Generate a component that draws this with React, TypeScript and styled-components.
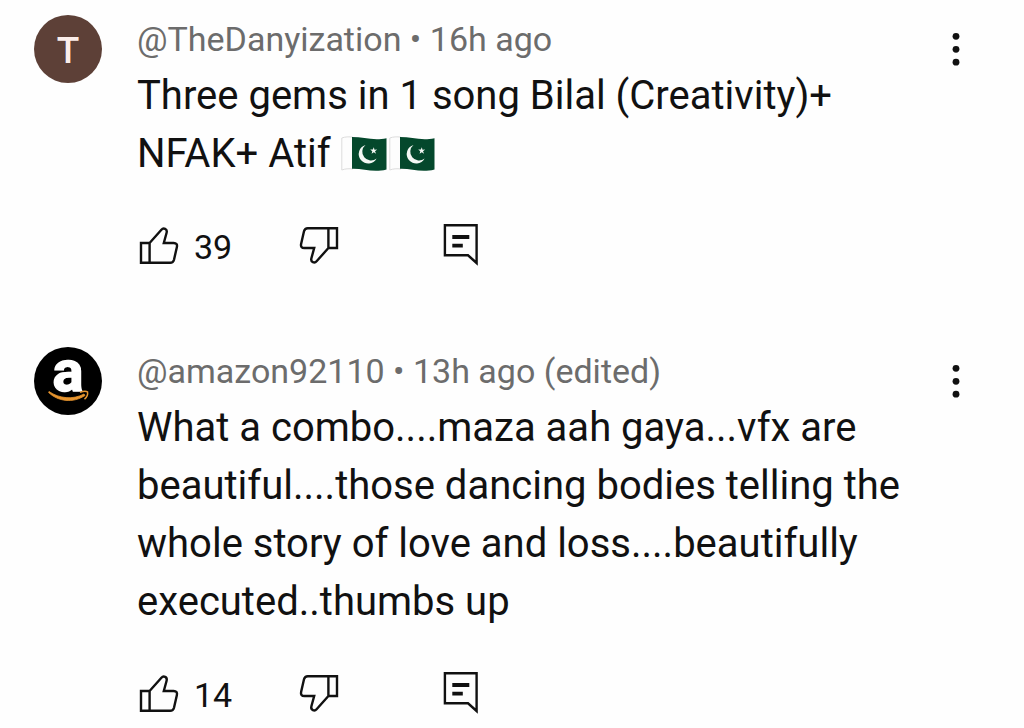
import React from "react";
import styled, { createGlobalStyle } from "styled-components";

const GlobalStyle = createGlobalStyle`
  body {
    margin: 0;
    background: #fefefe;
    color: #111;
    font-family: Roboto, "Liberation Sans", sans-serif;
  }
`;

const CommentList = styled.main`
  display: flex;
  flex-direction: column;
  gap: 77px;
  padding: 15px 34px 0;
`;

const CommentItem = styled.article`
  display: grid;
  grid-template-columns: 68px minmax(0, 1fr) 68px;
  column-gap: 35px;
`;

const Avatar = styled.div<{ $color: string }>`
  display: flex;
  align-items: center;
  justify-content: center;
  width: 68px;
  height: 68px;
  border-radius: 50%;
  background: ${(p) => p.$color};
  color: #fbeeea;
  font-size: 37px;
  font-weight: 500;
  line-height: 68px;
`;

const Initial = styled.span`
  padding-top: 3px;
`;

const Content = styled.div`
  padding-top: 2px;
`;

const Meta = styled.header`
  color: #6c6c6c;
  font-size: 34px;
  line-height: 44px;
  white-space: nowrap;
`;

const Body = styled.p`
  margin: 6px -60px 0 0;
  font-size: 40px;
  line-height: 58px;
`;

const Actions = styled.footer`
  display: grid;
  grid-template-columns: 160px 144px auto;
  justify-content: start;
  margin-top: 37px;
  padding-left: 2px;
`;

const IconButton = styled.button`
  display: flex;
  align-items: center;
  justify-content: flex-start;
  gap: 13px;
  height: 50px;
  padding: 0;
  border: 0;
  background: none;
  color: inherit;
  font-family: inherit;
  font-size: 34px;
  cursor: pointer;
`;

const Count = styled.span`
  padding-top: 4px;
`;

const MenuButton = styled(IconButton)`
  justify-content: center;
  height: 68px;
`;

const Icon = styled.svg`
  display: block;
  flex: none;
  fill: none;
  stroke: currentColor;
  stroke-width: 2.4;
`;

const FlagImage = styled.svg`
  display: inline-block;
  margin-right: 1px;
  vertical-align: -5px;
`;

const Logo = styled.svg`
  display: block;
  overflow: visible;
`;

const thumbPath =
  "M10.6 18 L22.4 4.7 C24.4 2.5 28.6 3.8 27.6 7.7 L24.8 18 H34.6 C37.4 18 38.4 19.5 37.9 21.9 L35 34.7 C34.4 36.9 33.3 37.8 31.2 37.8 H2 V18 Z M10.6 18 V37.8";

const ThumbUp = () => (
  <Icon width="42" height="40" viewBox="0 0 42 40" aria-hidden="true">
    <path d={thumbPath} />
  </Icon>
);

const ThumbDown = () => (
  <Icon width="42" height="40" viewBox="0 0 42 40" aria-hidden="true">
    <path d={thumbPath} transform="rotate(180 20 20.5)" />
  </Icon>
);

const ReplyIcon = () => (
  <Icon width="38" height="44" viewBox="0 0 38 44" aria-hidden="true">
    <path d="M1.9 2.3 H33.6 V40 L25 32.3 H1.9 Z" />
    <path d="M9.3 14 H26.3 M9.3 22.6 H19.8" strokeWidth="3.8" />
  </Icon>
);

const MoreIcon = () => (
  <svg width="8" height="34" viewBox="0 0 8 34" fill="#111" aria-hidden="true">
    <circle cx="4" cy="4.3" r="3.4" />
    <circle cx="4" cy="17.3" r="3.4" />
    <circle cx="4" cy="30.2" r="3.4" />
  </svg>
);

const PakistanFlag = () => (
  <FlagImage width="47" height="36" viewBox="0 0 47 36" role="img" aria-label="Flag of Pakistan">
    <path d="M.8 2 C4 .8 8 .5 12 1.2 V33 C8 32.4 4 32.8 .8 34 Z" fill="#fdfdfd" stroke="#dcdcdc" />
    <path d="M11 1 C23 1 32 5 45.500 2.200 V33.500 C32 37 23 32.500 11 32.800 Z" fill="#04482c" />
    <path d="M24.5 9 A9.5 9.5 0 1 0 35.6 22.6 A8.6 8.6 0 1 1 24.5 9 Z" fill="#f4f8f4" />
    <path d="M32.8 11.2 L33.5 13.8 L36.2 13.6 L34 15.2 L35.1 17.7 L32.8 16.2 L30.6 17.8 L31.3 15.2 L29.2 13.6 L31.8 13.6 Z" fill="#f4f8f4" />
  </FlagImage>
);

const AmazonLogo = () => (
  <Logo width="68" height="68" viewBox="0 0 68 68" role="img" aria-label="amazon92110">
    <text
      x="34"
      y="44"
      textAnchor="middle"
      fill="#fff"
      stroke="#fff"
      strokeWidth="1.5"
      fontFamily="Roboto, 'Liberation Sans', sans-serif"
      fontWeight="700"
      fontSize="58"
    >
      a
    </text>
    <path d="M15 44.5 C25 51.5 39 53 50 47 L51 48.5 C39 56.5 24 54.5 14.6 45.5 Z" fill="#e8952f" stroke="#e8952f" strokeWidth=".8" />
    <path d="M46 45.4 C49 44.2 52 44 53.5 44.8 C54 47 52.6 50.3 50.5 52.3" fill="none" stroke="#e8952f" strokeWidth="1.5" />
  </Logo>
);

type CommentProps = {
  avatar: React.ReactNode;
  avatarColor: string;
  meta: string;
  likes: number;
  children: React.ReactNode;
};

const Comment = ({ avatar, avatarColor, meta, likes, children }: CommentProps) => (
  <CommentItem>
    <Avatar $color={avatarColor}>{avatar}</Avatar>
    <Content>
      <Meta>{meta}</Meta>
      <Body>{children}</Body>
      <Actions>
        <IconButton type="button" aria-label={`Like, ${likes}`}>
          <ThumbUp />
          <Count>{likes}</Count>
        </IconButton>
        <IconButton type="button" aria-label="Dislike">
          <ThumbDown />
        </IconButton>
        <IconButton type="button" aria-label="Reply">
          <ReplyIcon />
        </IconButton>
      </Actions>
    </Content>
    <MenuButton type="button" aria-label="More options">
      <MoreIcon />
    </MenuButton>
  </CommentItem>
);

export default function App() {
  return (
    <>
      <GlobalStyle />
      <CommentList>
        <Comment
          avatar={<Initial>T</Initial>}
          avatarColor="#5d4037"
          meta="@TheDanyization • 16h ago"
          likes={39}
        >
          Three gems in 1 song Bilal (Creativity)+
          <br />
          NFAK+ Atif <PakistanFlag />
          <PakistanFlag />
        </Comment>
        <Comment
          avatar={<AmazonLogo />}
          avatarColor="#000"
          meta="@amazon92110 • 13h ago (edited)"
          likes={14}
        >
          What a combo....maza aah gaya...vfx are
          <br />
          beautiful....those dancing bodies telling the
          <br />
          whole story of love and loss....beautifully
          <br />
          executed..thumbs up
        </Comment>
      </CommentList>
    </>
  );
}
